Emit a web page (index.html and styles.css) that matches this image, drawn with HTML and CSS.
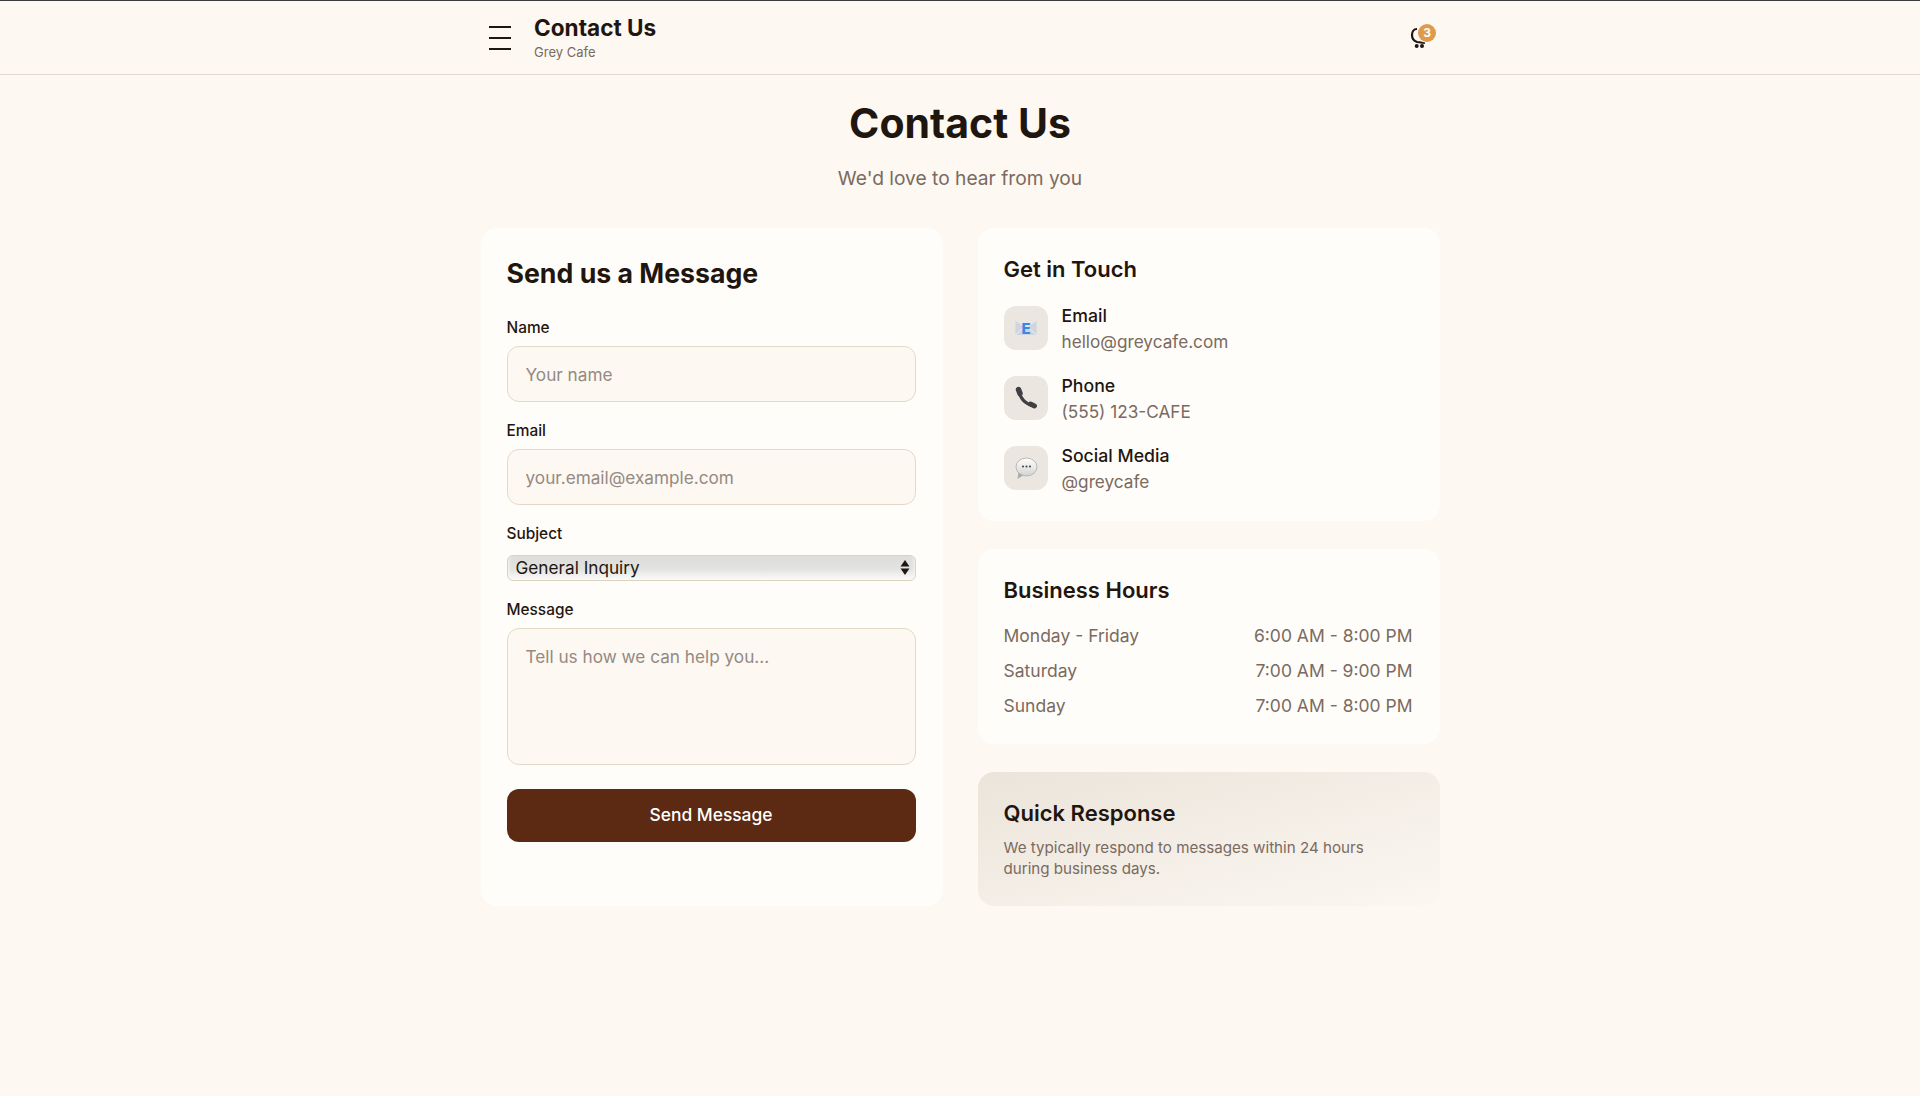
FILE: index.html
```html
<!DOCTYPE html>
<html lang="en">
<head>
    <meta charset="UTF-8">
    <meta name="viewport" content="width=device-width, initial-scale=1.0">
    <title>Contact Us - Grey Cafe</title>
    <link rel="stylesheet" href="styles.css">
</head>
<body>
    <header class="topbar">
        <div class="topbar-inner">
            <div class="topbar-left">
                <button type="button" class="menu-btn" aria-label="Menu">
                    <span></span><span></span><span></span>
                </button>
                <div class="topbar-text">
                    <div class="topbar-title">Contact Us</div>
                    <div class="topbar-sub">Grey Cafe</div>
                </div>
            </div>
            <div class="cart">
                <svg width="22" height="22" viewBox="0 0 22 22" fill="none" stroke="#1f1610" stroke-width="2.2">
                    <path d="M7 2C3.500 2 2 5 2 8c0 4 2 6 5 7l8 1"/>
                    <circle cx="6.700" cy="19" r="2" fill="#1f1610" stroke="none"/>
                    <circle cx="12" cy="19" r="2" fill="#1f1610" stroke="none"/>
                </svg>
                <span class="badge">3</span>
            </div>
        </div>
    </header>

    <main class="page">
        <h1>Contact Us</h1>
        <p class="lead">We'd love to hear from you</p>

        <div class="columns">
            <section class="card form-card">
                <h2>Send us a Message</h2>
                <form>
                    <div class="input-group">
                        <label for="name">Name</label>
                        <input type="text" id="name" placeholder="Your name">
                    </div>
                    <div class="input-group">
                        <label for="email">Email</label>
                        <input type="email" id="email" placeholder="your.email@example.com">
                    </div>
                    <div class="input-group">
                        <label for="subject">Subject</label>
                        <div class="select-box" id="subject">
                            <span>General Inquiry</span>
                            <svg width="10" height="17" viewBox="0 0 10 17" fill="#1f1610">
                                <path d="M5 1l4.500 6.500H.5z"/>
                                <path d="M5 16l4.500-6.500H.5z"/>
                            </svg>
                        </div>
                    </div>
                    <div class="input-group">
                        <label for="message">Message</label>
                        <textarea id="message" placeholder="Tell us how we can help you..."></textarea>
                    </div>
                    <button type="button" class="send-btn">Send Message</button>
                </form>
            </section>

            <div class="side">
                <section class="card">
                    <h3>Get in Touch</h3>
                    <div class="contact-row">
                        <div class="contact-icon">
                            <svg width="24" height="24" viewBox="0 0 24 24">
                                <path d="M1.500 5h21v14h-21z" fill="#cfd5dd"/>
                                <path d="M1.500 5L12 12.500 22.500 5z" fill="#e4e7eb"/>
                                <path d="M1.500 19L9 12M22.500 19L15 12" stroke="#eef0f2" fill="none"/>
                                <text x="12" y="17.500" class="mail-letter">E</text>
                            </svg>
                        </div>
                        <div>
                            <div class="contact-label">Email</div>
                            <div class="contact-value">hello@greycafe.com</div>
                        </div>
                    </div>
                    <div class="contact-row">
                        <div class="contact-icon">
                            <svg width="24" height="24" viewBox="0 0 24 24" fill="none" stroke="#3f3f44" stroke-linecap="round">
                                <path d="M5 4.500C5.500 11.500 11 18 19 19.500" stroke-width="3.200"/>
                                <path d="M4.500 3.500L6 7.500" stroke-width="5.500"/>
                                <path d="M16.500 18L20.500 20" stroke-width="5"/>
                            </svg>
                        </div>
                        <div>
                            <div class="contact-label">Phone</div>
                            <div class="contact-value">(555) 123-CAFE</div>
                        </div>
                    </div>
                    <div class="contact-row">
                        <div class="contact-icon">
                            <svg width="24" height="24" viewBox="0 0 24 24">
                                <defs>
                                    <linearGradient id="bubble" x1="0" y1="0" x2="0" y2="1">
                                        <stop offset="0" stop-color="#ffffff"/>
                                        <stop offset="1" stop-color="#d3d3d0"/>
                                    </linearGradient>
                                </defs>
                                <path d="M4.500 16l-1 7 7-4.500z" fill="#acaca9"/>
                                <ellipse cx="12.500" cy="11" rx="10.500" ry="9" fill="url(#bubble)" stroke="#acaca9" stroke-width="0.800"/>
                                <circle cx="9" cy="10.500" r="1" fill="#3c3c40"/>
                                <circle cx="12.500" cy="10.500" r="1" fill="#3c3c40"/>
                                <circle cx="16" cy="10.500" r="1" fill="#3c3c40"/>
                            </svg>
                        </div>
                        <div>
                            <div class="contact-label">Social Media</div>
                            <div class="contact-value">@greycafe</div>
                        </div>
                    </div>
                </section>

                <section class="card hours-card">
                    <h3>Business Hours</h3>
                    <div class="hours-row"><span>Monday - Friday</span><span>6:00 AM - 8:00 PM</span></div>
                    <div class="hours-row"><span>Saturday</span><span>7:00 AM - 9:00 PM</span></div>
                    <div class="hours-row"><span>Sunday</span><span>7:00 AM - 8:00 PM</span></div>
                </section>

                <section class="card quick-card">
                    <h3>Quick Response</h3>
                    <p>We typically respond to messages within 24 hours during business days.</p>
                </section>
            </div>
        </div>
    </main>
</body>
</html>
```

FILE: styles.css
```css
* {
    box-sizing: border-box;
}

body {
    font-family: Inter, "Liberation Sans", sans-serif;
    margin: 0;
    background-color: #fdf8f2;
    color: #1f1610;
    min-height: 1096px;
}

.topbar {
    height: 75px;
    border-top: 1px solid #3a3a3a;
    border-bottom: 1px solid #e0d8cc;
}

.topbar-inner {
    width: 960px;
    height: 100%;
    margin: 0 auto;
    padding: 0 4px 0 9px;
    display: flex;
    justify-content: space-between;
    align-items: center;
}

.topbar-left {
    display: flex;
    align-items: center;
    gap: 23px;
}

.menu-btn {
    width: 22px;
    padding: 0;
    border: none;
    background: none;
    display: flex;
    flex-direction: column;
    gap: 9px;
}

.menu-btn span {
    height: 2px;
    background-color: #1f1610;
    display: block;
}

.topbar-text {
    margin-top: -2px;
}

.topbar-title {
    font-size: 22.6px;
    font-weight: 700;
    line-height: 28px;
}

.topbar-sub {
    font-size: 13px;
    line-height: 16px;
    margin-top: 2px;
    color: #7a6a60;
}

.cart {
    position: relative;
    width: 30px;
    height: 30px;
    padding: 4px 0 0 4px;
}

.badge {
    position: absolute;
    top: 1px;
    left: 12px;
    width: 18px;
    height: 18px;
    border-radius: 50%;
    background-color: #e09a4c;
    box-shadow: 0 0 0 1px #fdf8f2;
    color: #fff;
    font-size: 12px;
    font-weight: 700;
    line-height: 18px;
    text-align: center;
}

.page {
    width: 960px;
    margin: 0 auto;
}

h1 {
    font-size: 41px;
    line-height: 48px;
    font-weight: 700;
    text-align: center;
    margin: 24px 0 0;
}

.lead {
    font-size: 19.2px;
    line-height: 28px;
    color: #7a6a60;
    text-align: center;
    margin: 17px 0 36px;
}

.columns {
    display: grid;
    grid-template-columns: 462px 462px;
    justify-content: center;
    gap: 35px;
}

.card {
    background-color: #fffdfa;
    border-radius: 16px;
    padding: 26px 27px 26px 26px;
}

.form-card {
    padding-top: 27px;
}

h2 {
    font-size: 26.7px;
    line-height: 36px;
    font-weight: 700;
    margin: 0 0 27px;
}

h3 {
    font-size: 22px;
    line-height: 30px;
    font-weight: 600;
    margin: 0 0 19px;
}

.input-group {
    margin-bottom: 19px;
}

.input-group label {
    display: block;
    font-size: 15.4px;
    line-height: 20px;
    font-weight: 500;
    margin-bottom: 8px;
}

.input-group input,
.input-group textarea {
    display: block;
    width: 100%;
    height: 56px;
    padding: 0 18px;
    border: 1.5px solid #e3d9c8;
    border-radius: 12px;
    background-color: #fdf8f2;
    font-family: inherit;
    font-size: 17.2px;
    color: #1f1610;
}

.input-group textarea {
    height: 137px;
    padding-top: 17px;
    resize: none;
}

.input-group ::placeholder {
    color: #948a82;
}

.select-box {
    height: 26px;
    margin-top: 11px;
    padding: 0 5px 2px 8px;
    border: 1px solid #dcd2c2;
    border-radius: 6px;
    background: linear-gradient(#dcdcda, #e3e3e1 55%, #fbfbfa);
    box-shadow: inset 3px 0 3px -2px #f7f7f6, inset -3px 0 3px -2px #f7f7f6;
    font-size: 17.2px;
    display: flex;
    justify-content: space-between;
    align-items: center;
}

.send-btn {
    width: 100%;
    height: 53px;
    margin-top: 5px;
    padding: 0 0 2px;
    border: none;
    border-radius: 12px;
    background-color: #5c2a12;
    color: #fff;
    font-family: inherit;
    font-size: 17.4px;
    font-weight: 500;
}

.side {
    display: flex;
    flex-direction: column;
    gap: 28px;
}

.contact-row {
    display: flex;
    align-items: center;
    gap: 14px;
    margin-bottom: 18px;
}

.contact-row:last-child {
    margin-bottom: 0;
}

.contact-icon {
    width: 44px;
    height: 44px;
    margin-top: -2px;
    border-radius: 12px;
    background-color: #ebe6e0;
    display: flex;
    justify-content: center;
    align-items: center;
}

.mail-letter {
    font-size: 15px;
    font-weight: 800;
    fill: #3b86e8;
    text-anchor: middle;
}

.contact-label {
    font-size: 17.7px;
    line-height: 26px;
    font-weight: 500;
}

.contact-value {
    font-size: 17.2px;
    line-height: 26px;
    color: #7a6a60;
}

.hours-card {
    padding-bottom: 21px;
}

.hours-card h3 {
    margin-bottom: 13px;
}

.hours-row {
    display: flex;
    justify-content: space-between;
    font-size: 17.5px;
    line-height: 35px;
    color: #7a6a60;
}

.quick-card {
    background: linear-gradient(165deg, #ebe4da, #fbf7f1);
    padding-bottom: 27px;
}

.quick-card h3 {
    margin-bottom: 9px;
}

.quick-card p {
    font-size: 15.15px;
    line-height: 21px;
    color: #7a6a60;
    margin: 0;
    max-width: 375px;
}
```
